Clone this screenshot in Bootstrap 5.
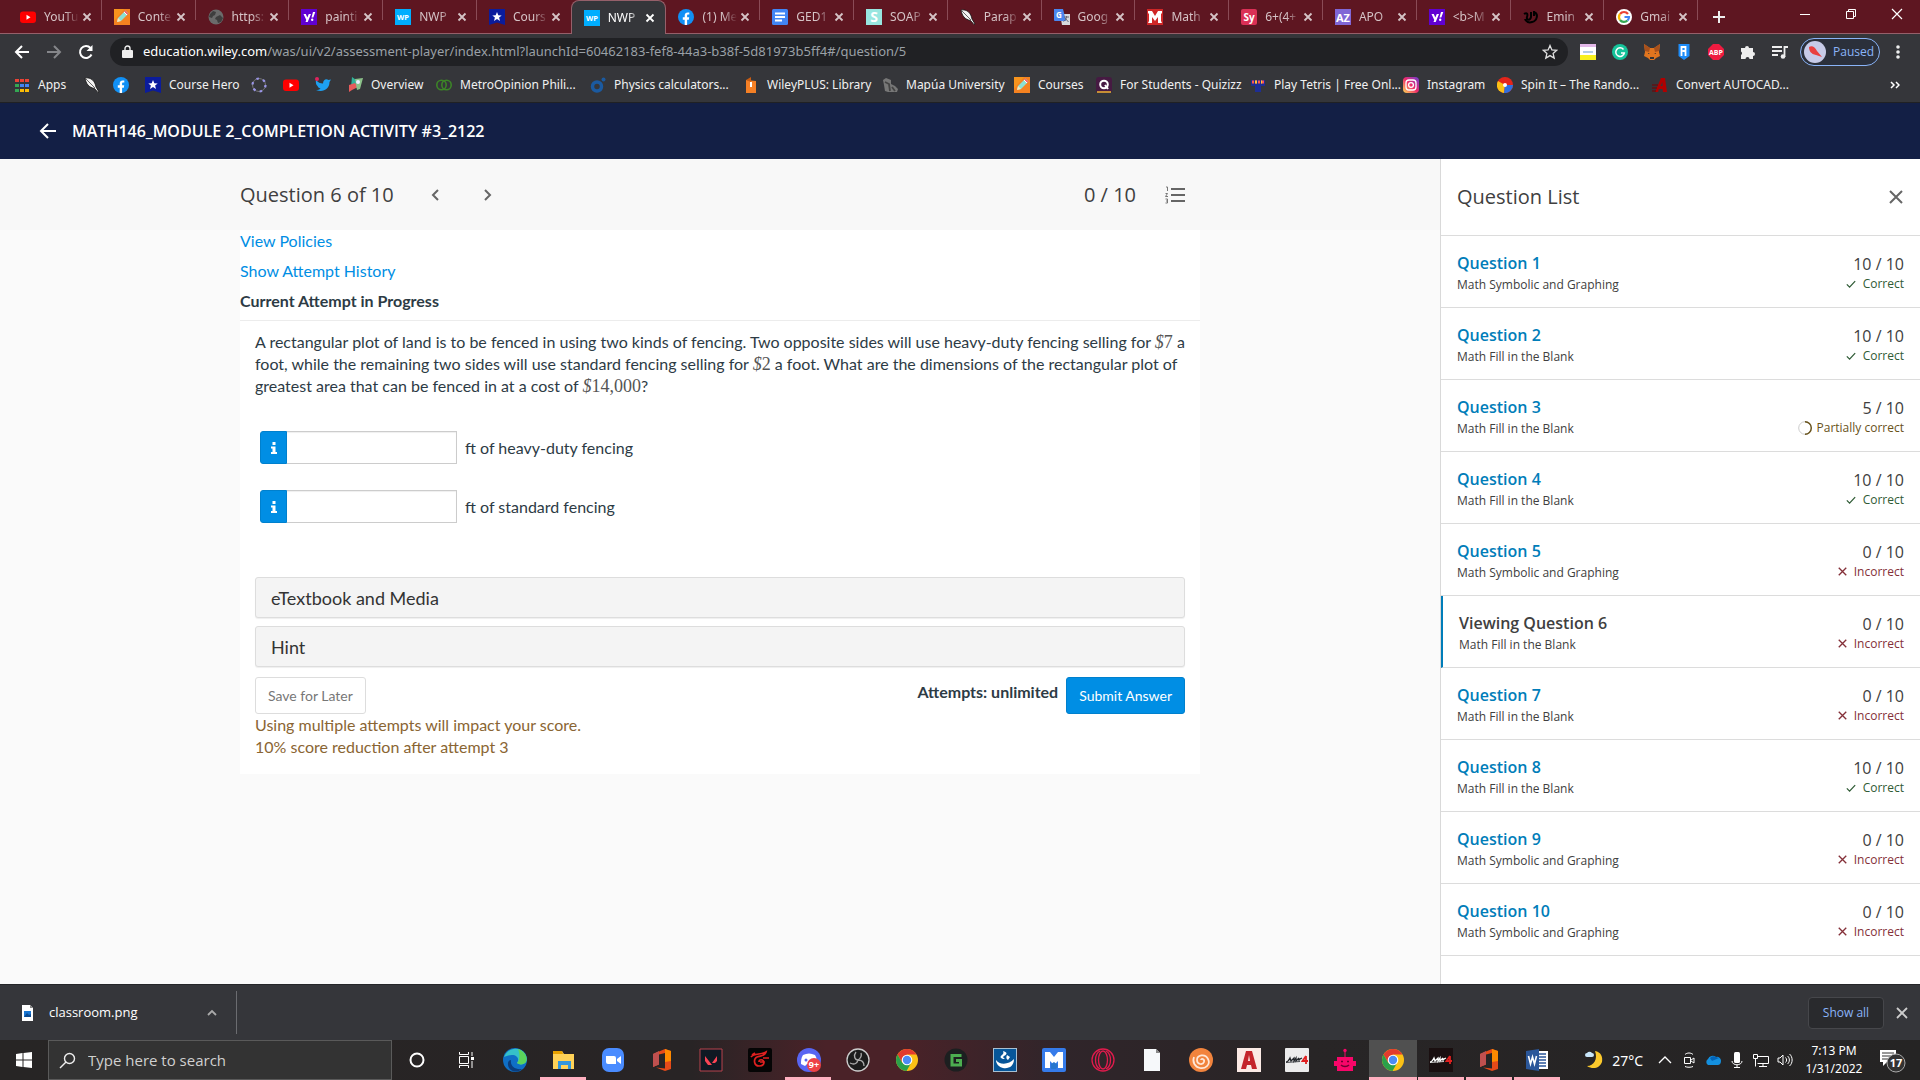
<!DOCTYPE html>
<html lang="en">
<head>
<meta charset="utf-8">
<meta name="viewport" content="width=device-width, initial-scale=1">
<title>NWP Assessment Player</title>
<link href="https://cdn.jsdelivr.net/npm/bootstrap@5.3.0/dist/css/bootstrap.min.css" rel="stylesheet">
<style>
:root{--chrome:#35363a;--maroon:#5e1621;--edge:#95606a;--sky:#008ee4;--line:#dcdcdc}
body{min-height:100vh;font-family:"Open Sans","Noto Sans",sans-serif;font-size:12px;color:#404040;background:#fafafa}
a{text-decoration:none}
svg{display:block;flex:none}
svg text{font-family:"Open Sans",sans-serif;font-weight:700}
.plain{border:0;background:none;padding:0;color:inherit}
.i16{width:16px;height:16px}
.i24{width:24px;height:24px}

/* tab strip */
.tabstrip{height:34px;background:var(--maroon);color:#d5c3c6;border-bottom:1px solid var(--edge);padding-left:8px}
.tabset{flex:0 1 1690px;min-width:0}
.tab-item{flex:1 1 0;min-width:0;height:34px;padding-left:12px}
.tab-item .vr{height:20px;opacity:1;background:#8a4b56;margin-left:6px}
.tab-name{flex:1 1 0;min-width:0;margin-left:8px;overflow:hidden;white-space:nowrap;color:inherit;font-family:"Noto Sans",sans-serif;font-size:12px;-webkit-mask-image:linear-gradient(90deg,#000 60%,transparent);mask-image:linear-gradient(90deg,#000 60%,transparent)}
.tab-current{background:var(--chrome);color:#fff;border:1px solid var(--edge);border-bottom:0;border-radius:8px 8px 0 0}
.tab-current .vr,.tab-before .vr{background:transparent}
.win-btn{width:46px;height:28px;color:#fff}

/* toolbar and bookmarks */
.toolbar{height:36px;background:var(--chrome);color:#f1f1f1;padding:4px 16px 4px 14px}
.omni{height:28px;border-radius:14px;background:#202124;padding:0 10px 0 12px;gap:10px}
.address{font-family:"Noto Sans",sans-serif;font-size:13px;color:#9aa0a6;white-space:nowrap}
.address b{font-weight:400;color:#fff}
.profile{height:28px;width:80px;border:1px solid #8ab4f8;border-radius:14px;background:#2b303b;color:#8ab4f8;font-size:12px;padding:0 0 0 3px;gap:7px;margin:0 8px 0 12px}
.bookmarks{height:33px;background:var(--chrome);color:#f1f1f1;border-bottom:1px solid #202124;padding:0 20px 2px 14px;display:grid;grid-template-columns:70px 29px 32px 106px 32px 32px 32px 89px 154px 153px 139px 132px 82px 154px 153px 94px 155px 150px 1fr;align-items:center}
.bookmarks a{color:inherit;gap:8px;white-space:nowrap;display:flex;align-items:center;min-width:0;font-family:"Noto Sans",sans-serif;font-size:12px;line-height:20px}

/* course header */
.course{height:56px;background:#131f45;color:#fff;padding-left:38px;gap:14px;font-size:16px;font-weight:600}
.stage{flex:1 1 0;min-width:0;padding:0}
.q-head{background:#f8f8f8;height:71px}
.sheet{width:66.667%;margin:0 auto}
.q-head .sheet{font-size:20px;height:71px}
.work{background:#fff;font-family:Lato,"Open Sans",sans-serif;font-size:16px;line-height:22px;color:#2d3b45;padding-bottom:16px}
.work a{color:var(--sky)}
.top-links{border-bottom:1px solid #ececec}
.top-links>*{display:block;margin-bottom:8px}
.work strong{font-weight:700}
.problem{padding:10px 15px 0}
.problem p{margin:0}
.tex{font-family:"Liberation Serif",serif;font-size:18px;line-height:20px;color:#555}
.answers{padding:34px 5px 54px;gap:26px}
.info{width:27px;height:33px;border:1px solid #0080cd;border-radius:3px 0 0 3px;background:var(--sky);color:#fff;padding:0;display:flex;align-items:center;justify-content:center}
.answer-box{width:170px;height:33px;border:1px solid #ccc;border-left:0;border-radius:0;box-shadow:inset 0 1px 1px #0001}
.drawer{display:block;width:100%;height:41px;border:1px solid #ddd;border-radius:3px;background:#f4f4f4;box-shadow:0 1px 1px #0001;text-align:left;padding:0 15px;font-size:18px;color:#333;margin-bottom:8px}
.actions{padding-top:2px}
.work .btn{height:37px;font-size:14px;border-radius:3px;padding:0 12px}
.btn-save{border-color:#ddd;color:#777;background:#fff}
.btn-send{border-color:#0080cd;color:#fff;background:var(--sky)}
.caution{color:#8a6533}

/* question list */
.side{width:480px;background:#fff;border-left:1px solid #d9d9d9}
.side-head{height:77px;padding:0 16px;font-size:20px;border-bottom:1px solid var(--line)}
.side .list-group-item{height:72px;padding:4px 16px 0;border:0;border-bottom:1px solid var(--line);border-radius:0;color:#404040;line-height:20px}
.side .list-group-item:last-child{border-bottom-width:1px}
.side .q-name{font-size:16px;font-weight:600;color:#007db9}
.side .viewing{border-left:2px solid #007db9}
.side .viewing .q-name{color:#404040}
.side .points{font-size:16px;text-align:right}
.verdict{gap:7px;line-height:20px}
.v-ok{color:#2f5b35}.v-bad{color:#843038}.v-part{color:#68521a;gap:5px}

/* downloads */
.shelf{height:56px;background:var(--chrome);color:#fff;border-top:1px solid #252629;padding-right:12px}
.file{width:237px;height:43px;border-right:1px solid #6b6c70;padding:0 18px 0 20px;gap:13px;font-size:13px}
.show-all{height:32px;width:76px;border:1px solid #46474b;border-radius:4px;background:#292a2d;color:#8ab4f8;font-size:12px;padding:0;margin-right:12px}

/* taskbar */
.taskbar{height:40px;color:#fff;background:linear-gradient(90deg,#272525 0,#282425 36%,#4a2228 43%,#4a2228 47%,#30252a 55%,#282526 68%,#252424 100%)}
.start{width:48px;height:40px}
.finder{width:344px;height:40px;border:1px solid #5a5a5a;background:#333;padding:0 10px;gap:12px}
.finder input{border:0;background:none;outline:0;color:#ddd;font-size:15px;padding:0;width:240px}
.finder input::placeholder{color:#d0d0d0;opacity:1}
.apps{display:grid;grid-template-columns:repeat(17,49px) repeat(7,48px)}
.app{height:40px;display:flex;align-items:center;justify-content:center;border-bottom:3px solid transparent;padding-top:3px}
.app.open{border-image:linear-gradient(90deg,transparent 4px,#ffb0c0 4px,#ffb0c0 44px,transparent 44px) 3}
.app.front{background:#505050;border-bottom-color:#ffb0c0}
.tray{padding-right:10px;font-family:"Noto Sans",sans-serif;font-size:12px}
.degrees{font-size:14px;margin-right:6px}
.clock{font-size:12px;line-height:18px;width:66px;text-align:center}
</style>
</head>
<body class="d-flex flex-column">
<svg width="0" height="0" class="position-absolute" aria-hidden="true">
<symbol id="x" viewBox="0 0 16 16"><path d="M4.500 4.500l7 7m0-7l-7 7" stroke="currentColor" stroke-width="1.800" fill="none"/></symbol>
<symbol id="yt" viewBox="0 0 16 16"><rect y="2.500" width="16" height="11.500" rx="3" fill="#f00"/><path d="M6.500 5.800v5l4-2.500z" fill="#fff"/></symbol>
<symbol id="pen" viewBox="0 0 16 16"><rect width="16" height="16" fill="#f7941d"/><path d="M10 0h6v16H0v-4z" fill="#f58220"/><path d="M3 13l1-4 7.500-7.500 3 3L7 12z" fill="#8de0d2"/><path d="M11.500 1.500l3 3-1.500 1.500-3-3z" fill="#f4666f"/><path d="M4 9l3 3-4 1z" fill="#ffe4b5"/><path d="M10 3l3 3" stroke="#fff"/></symbol>
<symbol id="globe" viewBox="0 0 16 16"><circle cx="8" cy="8" r="7.500" fill="#6b6b6b"/><path d="M2 5l3-3 3 1-1 3-2 1-1 2-3-1zM8 8l4-2 3 3-2 4-3 1-1-3-2-1z" fill="#1f1f1f" opacity=".6"/></symbol>
<symbol id="yahoo" viewBox="0 0 16 16"><rect width="16" height="16" fill="#6001d2"/><path d="M2.500 5h2.300l1.500 3.500L7.800 5H10l-3.300 8H4.500l.8-2zM12 3h2.300l-2 5.500H10.500zM10 10.700a1.200 1.200 0 102.400 0 1.200 1.200 0 00-2.400 0" fill="#fff"/></symbol>
<symbol id="wp" viewBox="0 0 16 16"><rect width="16" height="16" fill="#00aeff"/><text x="8" y="11" font-size="7.500" text-anchor="middle" fill="#fff">WP</text></symbol>
<symbol id="hero" viewBox="0 0 16 16"><path d="M0 0h16v16l-8-2.500L0 16z" fill="#0b1c9c"/><path d="M8 3l1.300 3.200 3.400.2-2.600 2.200.9 3.400-3-1.900-3 1.900.9-3.400-2.600-2.200 3.400-.2z" fill="#fff"/></symbol>
<symbol id="fb" viewBox="0 0 16 16"><circle cx="8" cy="8" r="8" fill="#1190f5"/><path d="M6.700 16v-5.300H4.800V8.200h1.900V6.500c0-2 1.200-3.100 3-3.100l1.600.1v2.100h-1c-1 0-1.200.5-1.200 1.200v1.400h2.100l-.4 2.500H9.100V16z" fill="#fff"/></symbol>
<symbol id="doc" viewBox="0 0 16 16"><rect width="16" height="16" rx="1.500" fill="#4285f4"/><path d="M3 4.500h10M3 8h10M3 11.500h7" stroke="#fff" stroke-width="1.800"/></symbol>
<symbol id="soap" viewBox="0 0 16 16"><rect width="16" height="16" fill="#98e6e0"/><text x="8" y="13" font-size="14" text-anchor="middle" fill="#fff">S</text></symbol>
<symbol id="quill" viewBox="0 0 16 16"><path d="M1 1c6-1 10 3 11 9l3 5-1 .5-3.500-4C5 10.500 2 7 1 1z" fill="#f2f2f2" stroke="#111" stroke-width=".8"/><path d="M2 2l9 9" stroke="#444" stroke-width=".8"/></symbol>
<symbol id="trans" viewBox="0 0 16 16"><path d="M6 5h10v11H8z" fill="#d7dade"/><path d="M0 0h9l3 12H1a1 1 0 01-1-1z" fill="#4a86f0"/><text x="5" y="9" font-size="8" text-anchor="middle" fill="#fff">G</text><path d="M10 8h5m-2.500-1v1c0 2-2 4-3 4.500M11 9l3.500 4" stroke="#667" fill="none"/></symbol>
<symbol id="mway" viewBox="0 0 16 16"><rect width="16" height="16" fill="#cf2727"/><path d="M1 2h4l3 5 3-5h4v2l-1 1v7l1 2h-4V8l-3 4-3-4v6H1l1-2V5L1 4z" fill="#fff"/></symbol>
<symbol id="sy" viewBox="0 0 16 16"><rect width="16" height="16" rx="2" fill="#db3056"/><text x="8" y="12" font-size="10" text-anchor="middle" fill="#fff">Sy</text></symbol>
<symbol id="az" viewBox="0 0 16 16"><rect width="16" height="16" fill="#8066d6"/><text x="8" y="12.500" font-size="11" text-anchor="middle" fill="#fff">AZ</text></symbol>
<symbol id="gen" viewBox="0 0 16 16"><path d="M1 5c3-2 4 0 3 3s3 4 4 0V3m3 0c5 2 3 9-2 10-3 1-6 0-7-3M11 2v5" stroke="#000" stroke-width="2" fill="none"/></symbol>
<symbol id="goog" viewBox="0 0 16 16"><circle cx="8" cy="8" r="8" fill="#fff"/><g fill="none" stroke-width="2.200"><path d="M12 5A5 5 0 004 5" stroke="#ea4335"/><path d="M4 5a5 5 0 000 6" stroke="#fbbc05"/><path d="M4 11a5 5 0 007.500.5" stroke="#34a853"/><path d="M11.500 11.500A5 5 0 0013 8H8.500" stroke="#4285f4"/></g></symbol>
<symbol id="check" viewBox="0 0 12 12"><path d="M1 6.500L4.300 9.800 11 2.500" stroke="currentColor" stroke-width="1.500" fill="none"/></symbol>
<symbol id="cross" viewBox="0 0 12 12"><path d="M1 1l10 10m0-10l-10 10" stroke="currentColor" stroke-width="1.800" fill="none"/></symbol>
<symbol id="chrome" viewBox="0 0 24 24"><circle cx="12" cy="12" r="11" fill="#fbc116"/><path d="M2.500 6.500A11 11 0 0121.500 6.500H12L7.200 14.700z" fill="#e33b2e"/><path d="M2.500 6.500A11 11 0 0011.500 23l4.700-8.300H7.200z" fill="#2aa04a"/><circle cx="12" cy="12" r="5.300" fill="#fff"/><circle cx="12" cy="12" r="4.200" fill="#4c8bf5"/></symbol>
<symbol id="office" viewBox="0 0 24 24"><path d="M15 1l6 2v18l-6 2-9-3.500 9 1V5L9 6.500v10L3 19V6z" fill="#e64a19"/><path d="M3 6l6-3v13.500L3 19z" fill="#c0504f"/><path d="M15 1l6 2v10l-6 1z" fill="#ff8a00"/></symbol>
<symbol id="info" viewBox="0 0 10 14"><path d="M3.500 1h3v3h-3zM2 5.500h4.500V11H8v2H2v-2h1.500V7.500H2z" fill="#fff"/></symbol>
<symbol id="mir" viewBox="0 0 24 24"><path d="M1 14c2 0 3-2 4-4l1 3 3-3 0 3 2-3v3l3-3c-1 2 0 3 1 1l2-1" stroke="currentColor" stroke-width="1.300" fill="none"/><path d="M1 14.500l14-1" stroke="currentColor" stroke-width=".8"/><path d="M21 8l-3.500 5H23m-2-5v8" stroke="#e02020" stroke-width="1.800" fill="none"/></symbol>
</svg>

<nav class="tabstrip d-flex align-items-start justify-content-between" aria-label="Open tabs">
<div class="tabset d-flex">
<div class="tab-item d-flex align-items-center"><svg class="i16"><use href="#yt"/></svg><a class="tab-name" href="#">YouTu</a><button class="plain" aria-label="Close tab"><svg class="i16"><use href="#x"/></svg></button><span class="vr"></span></div>
<div class="tab-item d-flex align-items-center"><svg class="i16"><use href="#pen"/></svg><a class="tab-name" href="#">Conte</a><button class="plain" aria-label="Close tab"><svg class="i16"><use href="#x"/></svg></button><span class="vr"></span></div>
<div class="tab-item d-flex align-items-center"><svg class="i16"><use href="#globe"/></svg><a class="tab-name" href="#">https:</a><button class="plain" aria-label="Close tab"><svg class="i16"><use href="#x"/></svg></button><span class="vr"></span></div>
<div class="tab-item d-flex align-items-center"><svg class="i16"><use href="#yahoo"/></svg><a class="tab-name" href="#">painti</a><button class="plain" aria-label="Close tab"><svg class="i16"><use href="#x"/></svg></button><span class="vr"></span></div>
<div class="tab-item d-flex align-items-center"><svg class="i16"><use href="#wp"/></svg><a class="tab-name" href="#">NWP</a><button class="plain" aria-label="Close tab"><svg class="i16"><use href="#x"/></svg></button><span class="vr"></span></div>
<div class="tab-item tab-before d-flex align-items-center"><svg class="i16"><use href="#hero"/></svg><a class="tab-name" href="#">Cours</a><button class="plain" aria-label="Close tab"><svg class="i16"><use href="#x"/></svg></button><span class="vr"></span></div>
<div class="tab-item tab-current d-flex align-items-center"><svg class="i16"><use href="#wp"/></svg><a class="tab-name" href="#">NWP</a><button class="plain" aria-label="Close tab"><svg class="i16"><use href="#x"/></svg></button><span class="vr"></span></div>
<div class="tab-item d-flex align-items-center"><svg class="i16"><use href="#fb"/></svg><a class="tab-name" href="#">(1) Me</a><button class="plain" aria-label="Close tab"><svg class="i16"><use href="#x"/></svg></button><span class="vr"></span></div>
<div class="tab-item d-flex align-items-center"><svg class="i16"><use href="#doc"/></svg><a class="tab-name" href="#">GED1</a><button class="plain" aria-label="Close tab"><svg class="i16"><use href="#x"/></svg></button><span class="vr"></span></div>
<div class="tab-item d-flex align-items-center"><svg class="i16"><use href="#soap"/></svg><a class="tab-name" href="#">SOAP</a><button class="plain" aria-label="Close tab"><svg class="i16"><use href="#x"/></svg></button><span class="vr"></span></div>
<div class="tab-item d-flex align-items-center"><svg class="i16"><use href="#quill"/></svg><a class="tab-name" href="#">Parap</a><button class="plain" aria-label="Close tab"><svg class="i16"><use href="#x"/></svg></button><span class="vr"></span></div>
<div class="tab-item d-flex align-items-center"><svg class="i16"><use href="#trans"/></svg><a class="tab-name" href="#">Goog</a><button class="plain" aria-label="Close tab"><svg class="i16"><use href="#x"/></svg></button><span class="vr"></span></div>
<div class="tab-item d-flex align-items-center"><svg class="i16"><use href="#mway"/></svg><a class="tab-name" href="#">Math</a><button class="plain" aria-label="Close tab"><svg class="i16"><use href="#x"/></svg></button><span class="vr"></span></div>
<div class="tab-item d-flex align-items-center"><svg class="i16"><use href="#sy"/></svg><a class="tab-name" href="#">6+(4+</a><button class="plain" aria-label="Close tab"><svg class="i16"><use href="#x"/></svg></button><span class="vr"></span></div>
<div class="tab-item d-flex align-items-center"><svg class="i16"><use href="#az"/></svg><a class="tab-name" href="#">APO</a><button class="plain" aria-label="Close tab"><svg class="i16"><use href="#x"/></svg></button><span class="vr"></span></div>
<div class="tab-item d-flex align-items-center"><svg class="i16"><use href="#yahoo"/></svg><a class="tab-name" href="#">&lt;b&gt;M</a><button class="plain" aria-label="Close tab"><svg class="i16"><use href="#x"/></svg></button><span class="vr"></span></div>
<div class="tab-item d-flex align-items-center"><svg class="i16"><use href="#gen"/></svg><a class="tab-name" href="#">Emin</a><button class="plain" aria-label="Close tab"><svg class="i16"><use href="#x"/></svg></button><span class="vr"></span></div>
<div class="tab-item d-flex align-items-center"><svg class="i16"><use href="#goog"/></svg><a class="tab-name" href="#">Gmai</a><button class="plain" aria-label="Close tab"><svg class="i16"><use href="#x"/></svg></button><span class="vr"></span></div>
</div>
<button class="plain flex-shrink-0 ms-2 me-auto pt-2" aria-label="New tab"><svg class="ms-1" width="18" height="18" viewBox="0 0 18 18"><path d="M9 3v12M3 9h12" stroke="#eee" stroke-width="2"/></svg></button>
<div class="d-flex flex-shrink-0">
<button class="plain win-btn" aria-label="Minimize"><svg class="mx-auto" width="12" height="12"><path d="M1 6.500h10" stroke="#fff"/></svg></button>
<button class="plain win-btn" aria-label="Restore"><svg class="mx-auto" width="12" height="12"><path d="M1.500 3.500h7v7h-7zM3.500 3V1.500h7v7H9" stroke="#fff" fill="none"/></svg></button>
<button class="plain win-btn" aria-label="Close"><svg class="mx-auto" width="12" height="12"><path d="M1 1l10 10M11 1L1 11" stroke="#fff" stroke-width="1.200"/></svg></button>
</div>
</nav>

<div class="toolbar d-flex align-items-center">
<button class="plain" aria-label="Back"><svg width="16" height="16"><path d="M15 8H2m6-6L2 8l6 6" stroke="#fff" stroke-width="2" fill="none"/></svg></button>
<button class="plain ms-3" aria-label="Forward"><svg width="16" height="16"><path d="M1 8h13M8 2l6 6-6 6" stroke="#85868a" stroke-width="2" fill="none"/></svg></button>
<button class="plain ms-3" aria-label="Reload"><svg width="16" height="16"><path d="M13.500 10.500A6 6 0 1112.500 4" stroke="#fff" stroke-width="2" fill="none"/><path d="M14.500 1v6h-6z" fill="#fff"/></svg></button>
<div class="omni d-flex align-items-center flex-grow-1 ms-3 me-2">
<svg width="11" height="14" viewBox="0 0 11 14"><path d="M1 5h9a1 1 0 011 1v6a1 1 0 01-1 1H1a1 1 0 01-1-1V6a1 1 0 011-1z" fill="#eee"/><path d="M3 6V3.500a2.500 2.500 0 015 0V6" stroke="#eee" stroke-width="1.400" fill="none"/></svg>
<a class="address flex-grow-1" href="#"><b>education.wiley.com</b>/was/ui/v2/assessment-player/index.html?launchId=60462183-fef8-44a3-b38f-5d81973b5ff4#/question/5</a>
<svg width="16" height="16" viewBox="0 0 16 16"><path d="M8 1.500l1.900 4.400 4.800.4-3.600 3.100 1.100 4.700L8 11.600l-4.200 2.500 1.100-4.700L1.300 6.300l4.800-.4z" stroke="#e0e0e0" stroke-width="1.300" fill="none"/></svg>
</div>
<div class="d-flex align-items-center gap-3 ps-1">
<svg class="i16"><rect width="16" height="16" fill="#fff"/><path d="M0 0h16v3H0z" fill="#e3b8e8"/><path d="M0 11h16v5H0z" fill="#f8f01e"/><path d="M3 8h10" stroke="#9bd" stroke-width="1.500"/></svg>
<svg class="i16" viewBox="0 0 16 16"><circle cx="8" cy="8" r="8" fill="#15c39a"/><path d="M11.500 5.500A4.300 4.300 0 1012.300 9H9" stroke="#fff" stroke-width="1.500" fill="none"/></svg>
<svg class="i16" viewBox="0 0 16 16"><path d="M0 0l6 4h4l6-4-1 8 1 4-4 2-2 2H6l-2-2-4-2 1-4z" fill="#e0751f"/><path d="M0 0l6 4-1 4-4-1zM16 0l-6 4 1 4 4-1z" fill="#a8501c"/><path d="M6 13h4v2H6zM4 9l2 1H4zm8 0l-2 1h2z" fill="#333"/></svg>
<svg class="i16" viewBox="0 0 16 16"><path d="M2.500 0h11v12L8 16l-5.500-4z" fill="#1d8cf8"/><path d="M5.500 12V3h4v4h-3m3 0v5" stroke="#fff" stroke-width="1.800" fill="none"/></svg>
<svg class="i16" viewBox="0 0 16 16"><path d="M5 0h6l5 5v6l-5 5H5l-5-5V5z" fill="#ef1b40"/><text x="8" y="10.500" font-size="7" text-anchor="middle" fill="#fff">ABP</text></svg>
<svg class="i16" viewBox="0 0 16 16"><path d="M1 4h4a2 2 0 114 0h4v4a2 2 0 110 4v3H9.500a2 2 0 00-4 0H1v-4a2 2 0 000-3.500z" fill="#eee"/></svg>
<svg class="i16" viewBox="0 0 16 16"><path d="M0 3h10M0 7h10M0 11h6M12.500 13V3H16" stroke="#eee" stroke-width="1.800" fill="none"/><circle cx="11" cy="12.500" r="2.300" fill="#eee"/></svg>
</div>
<button class="profile d-flex align-items-center flex-shrink-0"><svg width="22" height="22" viewBox="0 0 22 22"><circle cx="11" cy="11" r="11" fill="#c7cbe8"/><path d="M5 6c3-2 6 0 8 4l5 6-6-2c-5-1-7-4-7-8z" fill="#e9403f"/></svg>Paused</button>
<svg class="ms-1" width="12" height="16"><g fill="#eee"><circle cx="6" cy="3" r="1.800"/><circle cx="6" cy="8" r="1.800"/><circle cx="6" cy="13" r="1.800"/></g></svg>
</div>

<nav class="bookmarks" aria-label="Bookmarks">
<a href="#"><svg class="i16"><path d="M1 2h4v3H1zM6 2h4v3H6zM11 2h4v3h-4z" fill="#ea4335"/><path d="M1 7h4v3H1zM1 12h4v3H1z" fill="#34a853"/><path d="M6 7h4v3H6zM11 7h4v3h-4z" fill="#4285f4"/><path d="M6 12h4v3H6zM11 12h4v3h-4z" fill="#fbbc05"/></svg>Apps</a>
<a href="#" aria-label="Quill"><svg class="i16"><use href="#quill"/></svg></a>
<a href="#" aria-label="Facebook"><svg class="i16"><use href="#fb"/></svg></a>
<a href="#"><svg class="i16"><use href="#hero"/></svg>Course Hero</a>
<a href="#" aria-label="GeoGebra"><svg class="i16"><circle cx="8" cy="8" r="6.500" fill="none" stroke="#777" stroke-width="1"/><circle cx="8" cy="8" r="6.500" fill="none" stroke="#9a95e8" stroke-width="2.200" stroke-dasharray="2.500 4.300"/></svg></a>
<a href="#" aria-label="YouTube"><svg class="i16"><use href="#yt"/></svg></a>
<a href="#" aria-label="Twitter"><svg class="i16" viewBox="0 0 16 16"><path d="M1 3c2 2.500 4 3.500 7 3.500C8 3 11 1 13.500 3L16 2.500 14.500 5C14.500 12 8 16 1 13c2 0 3.500-.5 4.500-1.500C3.500 11 3 10 2.500 9 1 8 .500 5 1 3z" fill="#1da1f2"/><circle cx="2" cy="2" r="2" fill="#e0245e"/></svg></a>
<a href="#"><svg class="i16" viewBox="0 0 16 16"><path d="M5 0l7 5-2 6-6-1z" fill="#2fb39a"/><path d="M2 8l6-2 3 4-6 3-3 2z" fill="#e85b5b"/><path d="M8 2l8-1-3 11-3 1z" fill="#8cc28a"/><circle cx="11" cy="5" r="2" fill="#eef"/></svg>Overview</a>
<a href="#"><svg class="i16"><g fill="none" stroke="#3c8527" stroke-width="1.600"><circle cx="5.500" cy="8" r="4.700"/><circle cx="10.500" cy="8" r="4.700"/></g></svg>MetroOpinion Phili...</a>
<a href="#"><svg class="i16"><circle cx="7" cy="9.500" r="4.500" fill="none" stroke="#1b5aa0" stroke-width="3.500"/><circle cx="13.500" cy="2.500" r="2" fill="#1b5aa0"/></svg>Physics calculators...</a>
<a href="#"><svg class="i16"><path d="M3 3l10 1v12H3z" fill="#f58025"/><path d="M3 3l5-3v5z" fill="#c85c12"/><path d="M7 5h2v5H7z" fill="#fff"/></svg>WileyPLUS: Library</a>
<a href="#"><svg class="i16"><path d="M1 3l3-2 5 2v4l4 2 3 3-1 3H9l-3 0-3-1-1-6z" fill="#777"/><path d="M3 5l4 2 1 7M10 10l3 4" stroke="#444" stroke-width="1.800" fill="none"/></svg>Mapúa University</a>
<a href="#"><svg class="i16"><use href="#pen"/></svg>Courses</a>
<a href="#"><svg class="i16"><rect width="16" height="16" rx="3" fill="#461a42"/><circle cx="8" cy="7.500" r="3.800" fill="none" stroke="#fff" stroke-width="2"/><path d="M9 8l3 4" stroke="#fff" stroke-width="2"/><path d="M1 15h14" stroke="#f2b632" stroke-width="1.500"/></svg>For Students - Quizizz</a>
<a href="#"><svg class="i16"><path d="M1 3h14v6h-4v6H5V9H1z" fill="#1e2e93"/><path d="M2 5h2m1 0h2m1 0h2m1 0h3" stroke="#f55" stroke-width="3"/><path d="M5 5h2m4 0h1" stroke="#fc3" stroke-width="3"/></svg>Play Tetris | Free Onl...</a>
<a href="#"><svg class="i16"><defs><linearGradient id="ig" x1="0" y1="1" x2="1" y2="0"><stop stop-color="#fd5"/><stop offset=".5" stop-color="#ee2a6a"/><stop offset="1" stop-color="#6b3fd8"/></linearGradient></defs><rect width="16" height="16" rx="4" fill="url(#ig)"/><rect x="3" y="3" width="10" height="10" rx="3" fill="none" stroke="#fff" stroke-width="1.300"/><circle cx="8" cy="8" r="2.400" fill="none" stroke="#fff" stroke-width="1.300"/></svg>Instagram</a>
<a href="#"><svg class="i16"><circle cx="8" cy="8" r="8" fill="#e4251b"/><path d="M8 8L1 4a8 8 0 006 12z" fill="#fbc116"/><path d="M8 8l8 0a8 8 0 01-9 8z" fill="#2f6fe0"/><circle cx="8" cy="8" r="2" fill="#fff"/></svg>Spin It – The Rando...</a>
<a href="#"><svg class="i16"><path d="M3 15L9 1h4l2 14h-4l-.5-3H7l-1 3z" fill="#b00000"/><path d="M8.500 9l2-4v4z" fill="#35363a"/><path d="M0 8h6M0 11h5M0 14h4" stroke="#700"/></svg>Convert AUTOCAD...</a>
<a class="justify-content-end" href="#" aria-label="More bookmarks"><svg width="10" height="10"><path d="M1 2l3 3-3 3M6 2l3 3-3 3" stroke="#fff" stroke-width="1.500" fill="none"/></svg></a>
</nav>

<header class="course d-flex align-items-center">
<a href="#" aria-label="Back to course"><svg width="20" height="20"><path d="M18 10H3m7-7l-7 7 7 7" stroke="#fff" stroke-width="2" fill="none"/></svg></a>
<span>MATH146_MODULE 2_COMPLETION ACTIVITY #3_2122</span>
</header>

<div class="d-flex flex-grow-1">
<main class="stage">
<div class="q-head">
<div class="sheet d-flex align-items-center">
<span>Question 6 of 10</span>
<button class="plain ms-4 ps-1" aria-label="Previous question"><svg width="24" height="24"><path d="M16 7l-5 5 5 5" stroke="#666" stroke-width="2" fill="none"/></svg></button>
<button class="plain ms-4" aria-label="Next question"><svg class="ms-1" width="24" height="24"><path d="M11 7l5 5-5 5" stroke="#666" stroke-width="2" fill="none"/></svg></button>
<span class="ms-auto">0 / 10</span>
<button class="plain ms-4" aria-label="Question list"><svg class="ms-1" width="36" height="20"><path d="M7 4h14M7 10h14M7 16h14" stroke="#666" stroke-width="2"/><path d="M2 2h1.500v4M1.500 8.500h2L1.500 11.500h2.500M1.500 14h2v4h-2M2 16h1.500" stroke="#777" fill="none"/></svg></button>
</div>
</div>
<section class="sheet work">
<div class="top-links"><a href="#">View Policies</a><a href="#">Show Attempt History</a><strong>Current Attempt in Progress</strong></div>
<div class="problem">
<p>A rectangular plot of land is to be fenced in using two kinds of fencing. Two opposite sides will use heavy-duty fencing selling for <span class="tex"><i>$</i>7</span> a foot, while the remaining two sides will use standard fencing selling for <span class="tex"><i>$</i>2</span> a foot. What are the dimensions of the rectangular plot of greatest area that can be fenced in at a cost of <span class="tex"><i>$</i>14,000</span>?</p>
<div class="answers d-flex flex-column">
<div class="d-flex align-items-center"><button class="info" aria-label="Answer format"><svg width="10" height="14"><use href="#info"/></svg></button><input class="answer-box" id="heavy" type="text"><label class="ms-2" for="heavy">ft of heavy-duty fencing</label></div>
<div class="d-flex align-items-center"><button class="info" aria-label="Answer format"><svg width="10" height="14"><use href="#info"/></svg></button><input class="answer-box" id="standard" type="text"><label class="ms-2" for="standard">ft of standard fencing</label></div>
</div>
<button class="drawer">eTextbook and Media</button>
<button class="drawer">Hint</button>
<div class="actions d-flex">
<button class="btn btn-save">Save for Later</button>
<strong class="ms-auto me-2 pt-1">Attempts: unlimited</strong>
<button class="btn btn-send">Submit Answer</button>
</div>
<div class="caution">Using multiple attempts will impact your score.<br>10% score reduction after attempt 3</div>
</div>
</section>
</main>

<aside class="side flex-shrink-0">
<div class="side-head d-flex align-items-center justify-content-between"><span>Question List</span><button class="plain" aria-label="Close list"><svg width="16" height="16"><path d="M2 2l12 12M14 2L2 14" stroke="#666" stroke-width="2"/></svg></button></div>
<div class="list-group list-group-flush">
<div class="list-group-item d-flex align-items-center justify-content-between"><div><a class="q-name" href="#">Question 1</a><div>Math Symbolic and Graphing</div></div><div><div class="points">10 / 10</div><div class="verdict v-ok d-flex align-items-center justify-content-end"><svg width="10" height="12" viewBox="0 0 12 12"><use href="#check"/></svg>Correct</div></div></div>
<div class="list-group-item d-flex align-items-center justify-content-between"><div><a class="q-name" href="#">Question 2</a><div>Math Fill in the Blank</div></div><div><div class="points">10 / 10</div><div class="verdict v-ok d-flex align-items-center justify-content-end"><svg width="10" height="12" viewBox="0 0 12 12"><use href="#check"/></svg>Correct</div></div></div>
<div class="list-group-item d-flex align-items-center justify-content-between"><div><a class="q-name" href="#">Question 3</a><div>Math Fill in the Blank</div></div><div><div class="points">5 / 10</div><div class="verdict v-part d-flex align-items-center justify-content-end"><svg width="14" height="14"><circle cx="7" cy="7" r="6.300" fill="none" stroke="#ccc"/><path d="M7 .7a6.300 6.300 0 010 12.600" fill="none" stroke="#68521a" stroke-width="1.400"/></svg>Partially correct</div></div></div>
<div class="list-group-item d-flex align-items-center justify-content-between"><div><a class="q-name" href="#">Question 4</a><div>Math Fill in the Blank</div></div><div><div class="points">10 / 10</div><div class="verdict v-ok d-flex align-items-center justify-content-end"><svg width="10" height="12" viewBox="0 0 12 12"><use href="#check"/></svg>Correct</div></div></div>
<div class="list-group-item d-flex align-items-center justify-content-between"><div><a class="q-name" href="#">Question 5</a><div>Math Symbolic and Graphing</div></div><div><div class="points">0 / 10</div><div class="verdict v-bad d-flex align-items-center justify-content-end"><svg width="9" height="9" viewBox="0 0 12 12"><use href="#cross"/></svg>Incorrect</div></div></div>
<div class="list-group-item viewing d-flex align-items-center justify-content-between"><div><span class="q-name">Viewing Question 6</span><div>Math Fill in the Blank</div></div><div><div class="points">0 / 10</div><div class="verdict v-bad d-flex align-items-center justify-content-end"><svg width="9" height="9" viewBox="0 0 12 12"><use href="#cross"/></svg>Incorrect</div></div></div>
<div class="list-group-item d-flex align-items-center justify-content-between"><div><a class="q-name" href="#">Question 7</a><div>Math Fill in the Blank</div></div><div><div class="points">0 / 10</div><div class="verdict v-bad d-flex align-items-center justify-content-end"><svg width="9" height="9" viewBox="0 0 12 12"><use href="#cross"/></svg>Incorrect</div></div></div>
<div class="list-group-item d-flex align-items-center justify-content-between"><div><a class="q-name" href="#">Question 8</a><div>Math Fill in the Blank</div></div><div><div class="points">10 / 10</div><div class="verdict v-ok d-flex align-items-center justify-content-end"><svg width="10" height="12" viewBox="0 0 12 12"><use href="#check"/></svg>Correct</div></div></div>
<div class="list-group-item d-flex align-items-center justify-content-between"><div><a class="q-name" href="#">Question 9</a><div>Math Symbolic and Graphing</div></div><div><div class="points">0 / 10</div><div class="verdict v-bad d-flex align-items-center justify-content-end"><svg width="9" height="9" viewBox="0 0 12 12"><use href="#cross"/></svg>Incorrect</div></div></div>
<div class="list-group-item d-flex align-items-center justify-content-between"><div><a class="q-name" href="#">Question 10</a><div>Math Symbolic and Graphing</div></div><div><div class="points">0 / 10</div><div class="verdict v-bad d-flex align-items-center justify-content-end"><svg width="9" height="9" viewBox="0 0 12 12"><use href="#cross"/></svg>Incorrect</div></div></div>
</div>
</aside>
</div>

<div class="shelf d-flex align-items-center">
<div class="file d-flex align-items-center"><svg width="16" height="16"><path d="M2 0h8l3 3v13H2z" fill="#fff"/><path d="M10 0l3 3h-3z" fill="#888"/><path d="M4 6h7v6H4z" fill="#1976d2"/><path d="M4 12l3-4 2 2 2-1v3z" fill="#0b4a91"/></svg><span class="me-auto">classroom.png</span><button class="plain" aria-label="File actions"><svg width="12" height="12"><path d="M2 8l4-4 4 4" stroke="#aaa" stroke-width="1.800" fill="none"/></svg></button></div>
<button class="show-all ms-auto">Show all</button>
<button class="plain" aria-label="Close downloads"><svg width="12" height="12"><path d="M1 1l10 10M11 1L1 11" stroke="#ccc" stroke-width="1.800"/></svg></button>
</div>

<footer class="taskbar d-flex align-items-center">
<button class="plain start" aria-label="Start"><svg class="i16 mx-auto"><path d="M0 2l6.500-1v6.500H0zM7.500 1L16 0v7.500H7.500zM0 8.500h6.500V15L0 14zM7.500 8.500H16V16l-8.500-1z" fill="#fff"/></svg></button>
<div class="finder d-flex align-items-center flex-shrink-0"><svg width="17" height="17"><circle cx="10.500" cy="6.500" r="5" fill="none" stroke="#eee" stroke-width="1.400"/><path d="M7 10l-6 6" stroke="#eee" stroke-width="1.400"/></svg><input type="search" aria-label="Search" placeholder="Type here to search"></div>
<div class="apps flex-shrink-0">
<a class="app" href="#" aria-label="Cortana"><svg class="i16"><circle cx="8" cy="8" r="6.500" fill="none" stroke="#fff" stroke-width="2"/></svg></a>
<a class="app" href="#" aria-label="Task view"><svg class="i16"><path d="M1.500 4.500h9v7h-9zM1.500 0v2.500h9V0M1.500 16v-2.500h9V16M14 0v4M14 9v7" stroke="#fff" fill="none"/><path d="M13 5h3v3h-3z" fill="#fff"/></svg></a>
<a class="app" href="#" aria-label="Edge"><svg class="i24" viewBox="0 0 24 24"><circle cx="12" cy="12" r="12" fill="#0f6fc5"/><path d="M1 9C4 1 12-1 18 2c5 3 7 8 5 12-2 3-7 3-9 1 3-4 0-8-5-8-3 0-6 1-8 2z" fill="#35c1c9"/><path d="M15 1c7 2 10 9 8 13-2 3-7 3-9 1 3-3 3-9 1-14z" fill="#5bd45b"/><path d="M8 12c-1 6 4 10 11 9-6 5-13 2-14-4-.500-3 1-5 3-5z" fill="#0b3d7c"/></svg></a>
<a class="app open" href="#" aria-label="File Explorer"><svg class="i24" viewBox="0 0 24 24"><path d="M1 3h9l2 3h10v15H1z" fill="#ffd257"/><path d="M1 3h9l1 3H1z" fill="#e8a200"/><path d="M6 13h13v8h-3v-4H9v4H6z" fill="#3296dc"/></svg></a>
<a class="app" href="#" aria-label="Zoom"><svg class="i24" viewBox="0 0 24 24"><rect x="1" width="22" height="24" rx="7" fill="#4a8cff"/><path d="M5 8h8a2 2 0 012 2v6H7a2 2 0 01-2-2zM16 11l4-3v8l-4-3z" fill="#fff"/></svg></a>
<a class="app" href="#" aria-label="Office"><svg class="i24"><use href="#office"/></svg></a>
<a class="app" href="#" aria-label="Valorant"><svg class="i24" viewBox="0 0 24 24"><path d="M1 1h22v22H1z" fill="#0f1923" stroke="#b8424d"/><path d="M6 8l7 9h-4l-3-4zM18 8v5l-2 2h-3z" fill="#fa4454"/></svg></a>
<a class="app" href="#" aria-label="Garena"><svg class="i24" viewBox="0 0 24 24"><rect width="24" height="24" rx="2" fill="#050505"/><path d="M3 9c3-4 10-2 15-5-1 4-6 4-9 5-4 2-3 9 2 9 4 0 5-2 5-4h-4m4 0c-1-3-5-3-5 0M4 7l3-2m8 5h6" stroke="#e02020" stroke-width="1.700" fill="none"/></svg></a>
<a class="app open" href="#" aria-label="Discord"><svg class="i24" viewBox="0 0 24 24"><circle cx="12" cy="12" r="12" fill="#5865f2"/><path d="M6 7c4-2 8-2 12 0 2 3 2 6 2 9l-4 2-2-2h-4l-2 2-4-2c0-3 0-6 2-9z" fill="#fff"/><circle cx="9" cy="12" r="1.500" fill="#5865f2"/><circle cx="17" cy="17" r="7" fill="#ed4245"/><text x="17" y="20" font-size="9" text-anchor="middle" fill="#fff">9+</text></svg></a>
<a class="app" href="#" aria-label="OBS"><svg class="i24" viewBox="0 0 24 24"><circle cx="12" cy="12" r="11" fill="#1c1c1c" stroke="#ccc" stroke-width="1.300"/><path d="M10 4c-3 4-1 8 2 8 4 0 6 2 6 6M12 12c-1 4-4 5-8 3M12 12c3-2 4-4 3-7" stroke="#aaa" stroke-width="1.300" fill="none"/></svg></a>
<a class="app" href="#" aria-label="Chrome"><svg class="i24"><use href="#chrome"/></svg></a>
<a class="app" href="#" aria-label="Green G app"><svg class="i24" viewBox="0 0 24 24"><circle cx="12" cy="12" r="11.500" fill="#1c1f20"/><path d="M17.500 7.500H8v9.500h8.500v-4.500H12" stroke="#4cae50" stroke-width="3" fill="none"/></svg></a>
<a class="app" href="#" aria-label="Cup app"><svg class="i24" viewBox="0 0 24 24"><rect x=".5" y=".5" width="23" height="23" fill="#075699" stroke="#a8bfd2"/><path d="M3 12c3 5 13 5 18-1 0 7-5 10-11 9-4-1-7-4-7-8zM10 3c4 1 5 3 1 5-2 1 0 2 1 3-4 0-6-2-3-4 1-1 2-2 1-4zM14 7l3 2-2 3c-2-1-2-3-1-5z" fill="#fff"/></svg></a>
<a class="app" href="#" aria-label="M app"><svg class="i24" viewBox="0 0 24 24"><rect width="24" height="24" rx="2" fill="#357bea"/><path d="M3 4h5l4 5 4-5h5v16h-5v-7l-4 4-4-4v7H3z" fill="#fff"/><path d="M9 16l3-2 4 3-2 4H9z" fill="#2876cd"/></svg></a>
<a class="app" href="#" aria-label="Opera GX"><svg class="i24" viewBox="0 0 24 24"><g fill="none" stroke="#e21b4d" stroke-width="1.300"><circle cx="12" cy="12" r="11"/><ellipse cx="12" cy="12" rx="4.500" ry="9"/><path d="M9 3c-6 3-6 15 0 18M15 3c6 3 6 15 0 18"/></g></svg></a>
<a class="app" href="#" aria-label="Document"><svg class="i24" viewBox="0 0 24 24"><path d="M4 1h12l4 4v18H4z" fill="#f6f8fa"/><path d="M16 1l4 4h-4z" fill="#888"/></svg></a>
<a class="app" href="#" aria-label="Spiral app"><svg class="i24" viewBox="0 0 24 24"><circle cx="12" cy="12" r="12" fill="#f2843d"/><path d="M12 12c0-2 4-1 3 2s-7 3-7-2 8-7 11-1-3 10-8 9-8-6-6-11" stroke="#ffe8d8" stroke-width="1.700" fill="none"/></svg></a>
<a class="app" href="#" aria-label="AutoCAD"><svg class="i24" viewBox="0 0 24 24"><rect width="24" height="24" fill="#fbeae5"/><path d="M4 21L9 3h6l5 18h-5l-1-4h-4l-1 4zM11 13h2l-1-6z" fill="#c4242b"/></svg></a>
<a class="app text-dark" href="#" aria-label="Mir4"><svg class="i24"><rect width="24" height="24" rx="1" fill="#ececec"/><use href="#mir"/></svg></a>
<a class="app" href="#" aria-label="Robot"><svg class="i24" viewBox="0 0 24 24"><path d="M11.500 4h1v5H20v4h3v5h-3v5H4v-5H1v-5h3V9h7.500z" fill="#f80669"/><circle cx="12" cy="2.500" r="1.700" fill="#f80669"/><path d="M8 13.500h2m4 0h2M8 17c2 2 6 2 8 0" stroke="#6d0030" stroke-width="1.500" fill="none"/></svg></a>
<a class="app front" href="#" aria-label="Chrome window"><svg class="i24"><use href="#chrome"/></svg></a>
<a class="app open text-white" href="#" aria-label="Mir4 window"><svg class="i24"><rect width="24" height="24" fill="#1a0f10"/><use href="#mir"/></svg></a>
<a class="app open" href="#" aria-label="Office window"><svg class="i24"><use href="#office"/></svg></a>
<a class="app open" href="#" aria-label="Word"><svg class="i24" viewBox="0 0 24 24"><path d="M12 3h11v18H12z" fill="#fff"/><path d="M13 6h8M13 9h8M13 12h8M13 15h8M13 18h8" stroke="#2b579a" stroke-width="1.300"/><path d="M1 3l13-2v22L1 21z" fill="#2b579a"/><path d="M3.500 8l2 8 2-7 2 7 2-8" stroke="#fff" stroke-width="1.600" fill="none"/></svg></a>
</div>
<div class="tray d-flex align-items-center ms-auto gap-2">
<svg width="20" height="20" viewBox="0 0 20 20"><path d="M11 1c6 1 8 6 7 11-2 6-9 8-15 4 7 0 11-7 8-15z" fill="#fcc92c"/><path d="M3 7a2 2 0 010-4 3 3 0 015 0 2 2 0 010 4z" fill="#c8e6fa"/></svg>
<span class="degrees">27°C</span>
<svg class="i16"><path d="M2 11l6-6 6 6" stroke="#fff" stroke-width="1.300" fill="none"/></svg>
<svg class="i16"><path d="M3.500 5.500h6v6h-6zM10 8l3-2v5l-3-2M4 2.500c2-2 6-2 8 0M4 14.500c2 1 6 1 8 0" stroke="#fff" fill="none"/></svg>
<svg class="i16"><path d="M3 13a3.500 3.500 0 010-6 5 5 0 018-2 4 4 0 015 4c0 3-2 4-3 4z" fill="#1490df"/><path d="M5 6a5 5 0 016-1l3 1-7 3z" fill="#0364b8"/></svg>
<svg class="i16"><rect x="5" width="6" height="11" rx="1.500" fill="#fff"/><path d="M3 9c0 5 10 5 10 0M8 13v3M5 15.500h6" stroke="#fff" fill="none"/></svg>
<svg class="i16"><path d="M4.500 4.500H15.500v7H4.500M.5 2.500h4v4h-4zM2.500 6.500v8M10 11.500v3M6 14.500h8" stroke="#fff" fill="none"/></svg>
<svg class="i16"><path d="M1 6h2l3-3v10L3 10H1zM8.500 5.500c1.500 1.500 1.500 3.500 0 5M10.500 4c2.500 2 2.500 6 0 8M12.500 2c3.500 3 3.500 9 0 12" stroke="#fff" fill="none"/></svg>
<div class="clock"><div>7:13 PM</div><div>1/31/2022</div></div>
<svg class="ms-1 me-1" width="27" height="26" viewBox="0 0 27 26"><path d="M1 3h16v12H8l-4 4v-4H1z" fill="#fff"/><path d="M3 6h12M3 9h12M3 12h8" stroke="#333"/><circle cx="17" cy="16" r="9" fill="#333" stroke="#aaa"/><text x="17" y="20" font-size="11" text-anchor="middle" fill="#fff">17</text></svg>
</div>
</footer>
<script src="https://cdn.jsdelivr.net/npm/bootstrap@5.3.0/dist/js/bootstrap.bundle.min.js"></script>
</body>
</html>
